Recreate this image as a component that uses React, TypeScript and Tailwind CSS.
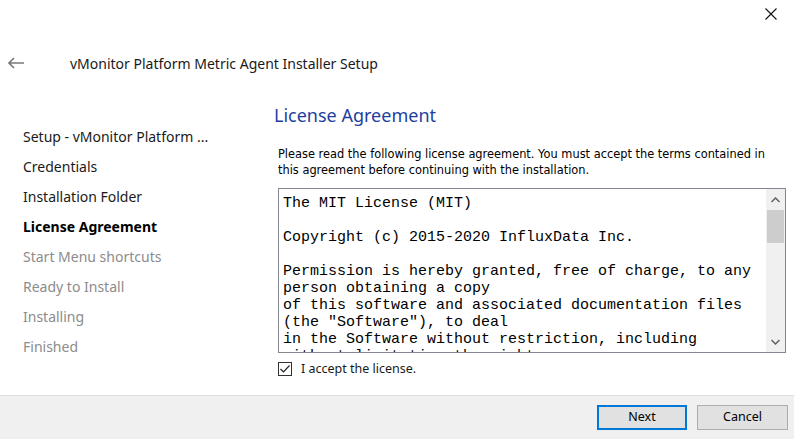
import React from "react";

const steps = [
  { label: "Setup - vMonitor Platform ...", state: "done" },
  { label: "Credentials", state: "done" },
  { label: "Installation Folder", state: "done" },
  { label: "License Agreement", state: "active" },
  { label: "Start Menu shortcuts", state: "todo" },
  { label: "Ready to Install", state: "todo" },
  { label: "Installing", state: "todo" },
  { label: "Finished", state: "todo" },
];

const licenseLines = [
  "The MIT License (MIT)",
  "",
  "Copyright (c) 2015-2020 InfluxData Inc.",
  "",
  "Permission is hereby granted, free of charge, to any",
  "person obtaining a copy",
  "of this software and associated documentation files",
  '(the "Software"), to deal',
  "in the Software without restriction, including",
  "without limitation the rights",
];

export default function App() {
  return (
    <div
      className="w-[794px] h-[439px] bg-white flex flex-col overflow-hidden text-black"
      style={{ fontFamily: '"Noto Sans", sans-serif' }}
    >
      {/* window chrome */}
      <div className="h-[44px] flex justify-end items-start">
        <button className="w-[46px] h-[30px] flex items-center justify-center mt-[-1px]">
          <svg width="12" height="12" viewBox="0 0 12 12">
            <path d="M0.5 0.5 L11.5 11.5 M11.5 0.5 L0.5 11.5" stroke="#111" strokeWidth="1.1" />
          </svg>
        </button>
      </div>

      <div className="h-[38px] flex items-center">
        <div className="w-[70px] pl-[8px] flex items-center">
          <svg width="16" height="12" viewBox="0 0 16 12">
            <path d="M6 1 L1 6 L6 11 M1 6 L16 6" stroke="#7a7a7a" strokeWidth="1.6" fill="none" />
          </svg>
        </div>
        <span className="text-[14px] text-[#1a1a1a]">vMonitor Platform Metric Agent Installer Setup</span>
      </div>

      <div className="flex-1 flex">
        <nav className="w-[272px] shrink-0 pl-[23px] pt-[40px] flex flex-col">
          {steps.map((s) => (
            <div
              key={s.label}
              className={
                "h-[30px] leading-[30px] text-[14px] whitespace-nowrap " +
                (s.state === "active"
                  ? "font-bold text-black"
                  : s.state === "done"
                  ? "text-[#1a1a1a]"
                  : "text-[#8c8c8c]")
              }
            >
              {s.label}
            </div>
          ))}
        </nav>

        <main className="flex-1 pt-[20px]">
          <h1 className="text-[18px] leading-[26px] text-[#1e3f9f] ml-[2px]">License Agreement</h1>
          <p
            className="mt-[18px] ml-[6px] text-[11.4px] leading-[16px] text-black"
            style={{ fontFamily: '"DejaVu Sans", sans-serif' }}
          >
            Please read the following license agreement. You must accept the terms contained in
            <br />
            this agreement before continuing with the installation.
          </p>

          <div className="mt-[10px] ml-[6px] w-[508px] h-[165px] border border-[#828790] flex">
            <div
              className="flex-1 overflow-hidden pl-[4px] pt-[6px] text-[15px] leading-[17px] text-black"
              style={{ fontFamily: '"Liberation Mono", monospace' }}
            >
              {licenseLines.map((l, i) => (
                <div key={i} className="h-[17px] whitespace-pre">
                  {l}
                </div>
              ))}
            </div>
            <div className="w-[19px] bg-[#f0f0f0] flex flex-col items-center">
              <div className="h-[21px] flex items-center justify-center">
                <svg width="9" height="6" viewBox="0 0 9 6">
                  <path d="M0.5 5 L4.5 1 L8.5 5" stroke="#606060" strokeWidth="1.5" fill="none" />
                </svg>
              </div>
              <div className="w-[17px] h-[33px] bg-[#cdcdcd]" />
              <div className="flex-1" />
              <div className="h-[20px] flex items-center justify-center">
                <svg width="9" height="6" viewBox="0 0 9 6">
                  <path d="M0.5 1 L4.5 5 L8.5 1" stroke="#606060" strokeWidth="1.5" fill="none" />
                </svg>
              </div>
            </div>
          </div>

          <label className="mt-[6px] ml-[6px] flex items-center gap-[9px]">
            <span className="w-[14px] h-[14px] border border-[#333] bg-white flex items-center justify-center">
              <svg width="10" height="8" viewBox="0 0 10 8">
                <path d="M0.5 4 L3.5 7 L9.5 0.5" stroke="#222" strokeWidth="1.2" fill="none" />
              </svg>
            </span>
            <span className="text-[12.5px] leading-[19px] text-[#1a1a1a]">I accept the license.</span>
          </label>
        </main>
      </div>

      <footer className="h-[44px] bg-[#f0f0f0] border-t border-[#dfdfdf] flex items-center justify-end gap-[10px] pr-[6px]">
        <button className="w-[90px] h-[25px] bg-[#e1e1e1] border-2 border-[#0078d7] text-[12.5px] text-black">
          Next
        </button>
        <button className="w-[91px] h-[25px] bg-[#e1e1e1] border border-[#adadad] text-[12.5px] text-black">
          Cancel
        </button>
      </footer>
    </div>
  );
}
